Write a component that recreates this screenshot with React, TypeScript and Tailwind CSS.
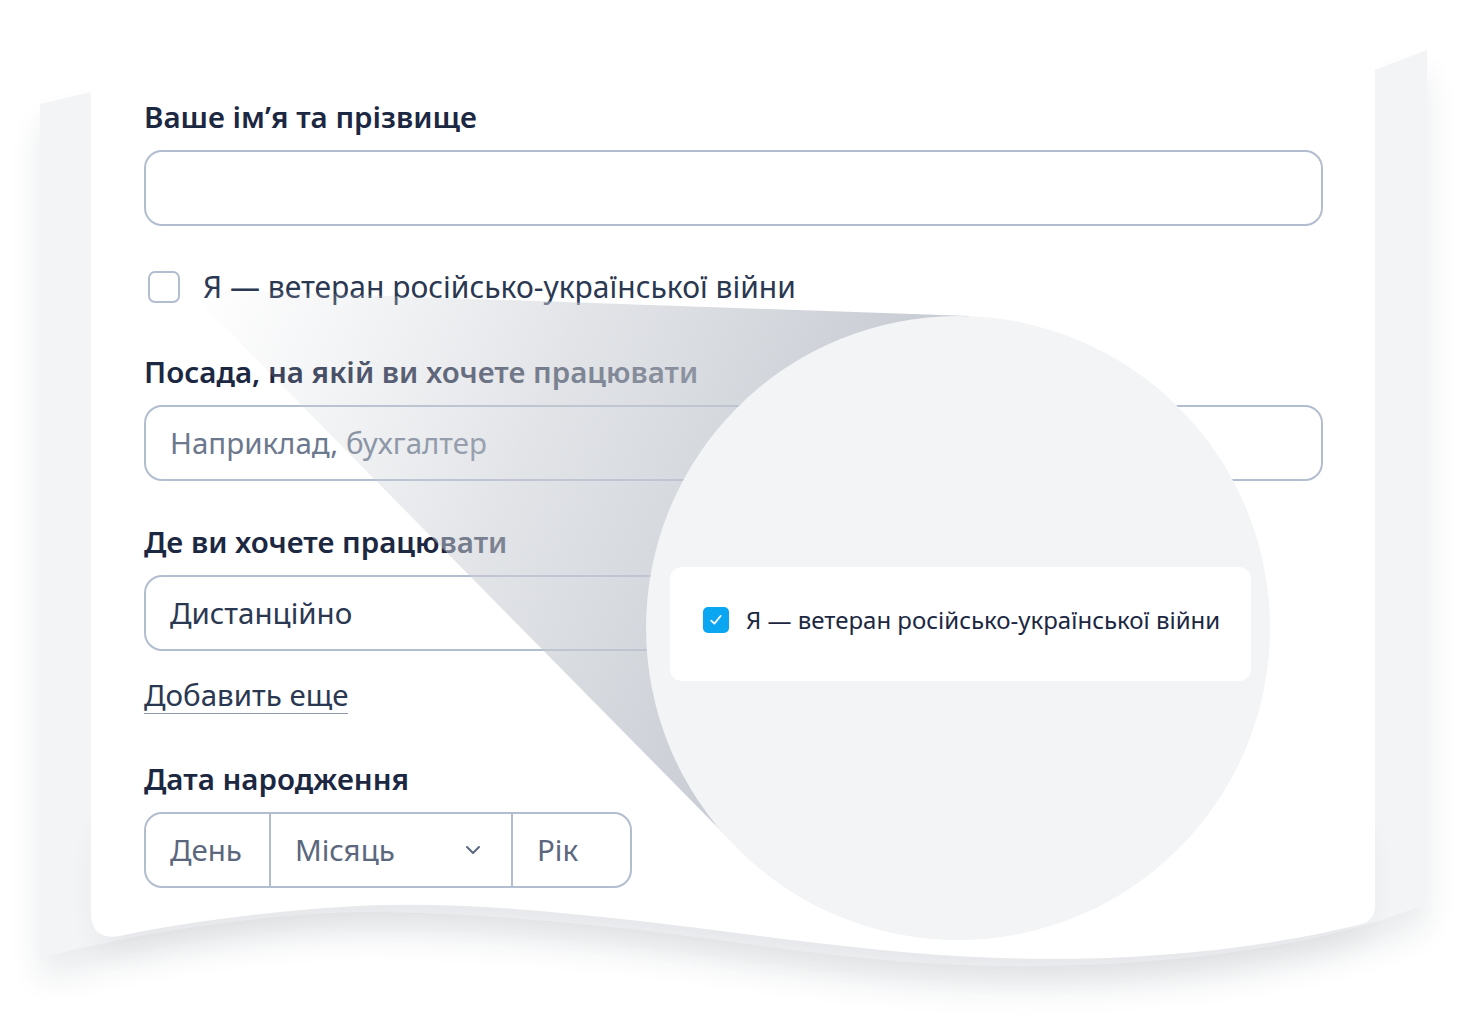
import { ChevronDown } from "lucide-react";

// paper sheets drawn behind the form
const FRONT =
  "M91,0 H1375 V905 Q1375,920 1362,924 C1250,952 1120,962 1000,958 C880,954 760,935 640,921 C540,910 440,900 340,907 C250,913 170,925 120,936 Q91,941 91,912 Z";
const FRONT_BOTTOM =
  "M100,820 H1365 V905 Q1365,920 1352,924 C1250,952 1120,962 1000,958 C880,954 760,935 640,921 C540,910 440,900 340,907 C250,913 170,925 120,936 Q100,941 100,912 Z";
const BACK =
  "M40,104 L91,92 L1375,92 L1375,70 L1427,50 L1427,903 C1320,950 1150,968 1000,966 C860,964 760,944 640,930 C500,915 380,908 300,915 C200,923 110,940 40,958 Z";

function PaperBackdrop() {
  return (
    <svg className="absolute inset-0" width="1466" height="1028" viewBox="0 0 1466 1028">
      <defs>
        <filter id="soft" x="-10%" y="-10%" width="120%" height="130%">
          <feGaussianBlur stdDeviation="16" />
        </filter>
      </defs>
      <path d={BACK} fill="#1f2937" opacity="0.09" filter="url(#soft)" transform="translate(0,22)" />
      <path d={BACK} fill="#f3f4f6" />
      <path d={FRONT_BOTTOM} fill="#1f2937" opacity="0.07" filter="url(#soft)" transform="translate(0,12)" />
      <path d={FRONT} fill="#ffffff" />
    </svg>
  );
}

function Label({ children, className = "" }: { children: React.ReactNode; className?: string }) {
  return (
    <div className={`text-[29.5px] font-semibold leading-[36px] text-[#1c2742] ${className}`}>
      {children}
    </div>
  );
}

function Field({ children, className = "" }: { children?: React.ReactNode; className?: string }) {
  return (
    <div
      className={`mt-[15px] flex h-[76px] items-center rounded-[18px] border-2 border-[#b3bdd0] bg-white px-[24px] text-[29.5px] ${className}`}
    >
      {children}
    </div>
  );
}

function Magnifier() {
  return (
    <>
      <svg
        className="pointer-events-none absolute inset-0 z-20"
        width="1466"
        height="1028"
        viewBox="0 0 1466 1028"
      >
        <defs>
          <linearGradient id="cone" gradientUnits="userSpaceOnUse" x1="190" y1="290" x2="820" y2="560">
            <stop offset="0" stopColor="#d1d5db" stopOpacity="0" />
            <stop offset="0.55" stopColor="#c9cdd4" stopOpacity="0.55" />
            <stop offset="1" stopColor="#bfc4cc" stopOpacity="0.85" />
          </linearGradient>
        </defs>
        <polygon points="187,289 969,316 958,628 736,846" fill="url(#cone)" />
      </svg>
      <div className="absolute left-[646px] top-[316px] z-30 flex h-[624px] w-[624px] flex-col rounded-full bg-[#f3f4f6] pl-[24px] pt-[251px]">
        <div className="flex h-[114px] w-[581px] items-center gap-[17px] rounded-[12px] bg-white pl-[33px] pb-[8px]">
          <span className="flex h-[26px] w-[26px] items-center justify-center rounded-[5px] bg-[#0aa6f2]">
            <svg width="16" height="16" viewBox="0 0 16 16" fill="none">
              <path d="M3.2 8.6 L6.4 11.6 L12.6 4" stroke="#fff" strokeWidth="1.8" strokeLinecap="round" strokeLinejoin="round" />
            </svg>
          </span>
          <span className="text-[24px] leading-[32px] text-[#1c2742]">
            Я — ветеран російсько-української війни
          </span>
        </div>
      </div>
    </>
  );
}

export default function App() {
  return (
    <div
      className="relative h-[1028px] w-[1466px] overflow-hidden bg-white"
      style={{ fontFamily: '"Noto Sans", "Open Sans", sans-serif' }}
    >
      <PaperBackdrop />

      <div className="relative z-10 flex w-[1323px] flex-col pl-[144px] pt-[99px]">
        <Label>Ваше ім’я та прізвище</Label>
        <Field />

        <div className="mt-[43px] flex h-[36px] items-center gap-[23px] pl-[4px]">
          <span className="h-[32px] w-[32px] rounded-[7px] border-2 border-[#b3bdd0] bg-white" />
          <span className="text-[30px] leading-[36px] text-[#2b3852]">
            Я — ветеран російсько-української війни
          </span>
        </div>

        <Label className="mt-[49px]">Посада, на якій ви хочете працювати</Label>
        <Field className="text-[#6c788d]">Наприклад, бухгалтер</Field>

        <Label className="mt-[43px]">Де ви хочете працювати</Label>
        <Field className="w-[760px] text-[#2b3852]">Дистанційно</Field>

        <div className="mt-[26px] flex">
          <span className="border-b-[1.5px] border-[#8e99ad] text-[29.5px] leading-[36px] text-[#2b3852]">
            Добавить еще
          </span>
        </div>

        <Label className="mt-[47px]">Дата народження</Label>
        <div className="mt-[15px] flex h-[76px] w-[488px] rounded-[18px] border-2 border-[#b3bdd0] bg-white text-[29.5px] text-[#5b677d]">
          <div className="flex w-[123px] items-center pl-[24px]">День</div>
          <div className="flex w-[242px] items-center justify-between border-l-2 border-[#b3bdd0] pl-[24px] pr-[26px]">
            <span>Місяць</span>
            <ChevronDown size={24} strokeWidth={2} className="text-[#5b677d]" />
          </div>
          <div className="flex flex-1 items-center border-l-2 border-[#b3bdd0] pl-[24px]">Рік</div>
        </div>
      </div>

      <Magnifier />
    </div>
  );
}
